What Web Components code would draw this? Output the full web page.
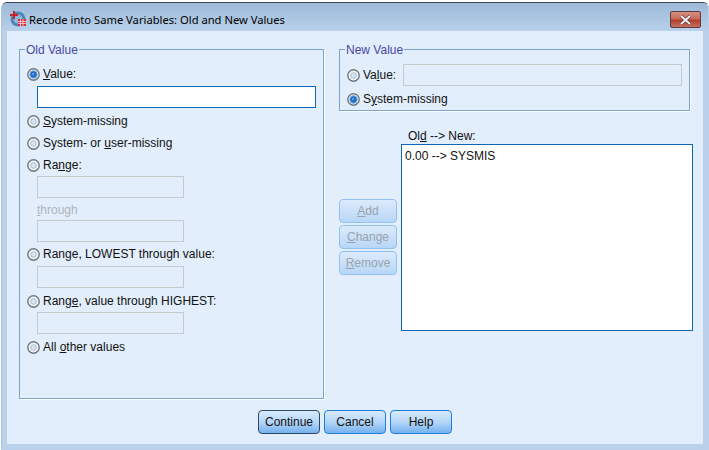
<!DOCTYPE html>
<html>
<head>
<meta charset="utf-8">
<style>
  html, body { margin: 0; padding: 0; background: #fff; }
  body { width: 709px; height: 450px; overflow: hidden; font: 12px "Liberation Sans", Arial, sans-serif; color: #111; }
</style>
</head>
<body>
<spss-dialog caption="Recode into Same Variables: Old and New Values">
  <div style="display:grid;grid-template-columns:305px 366px;column-gap:15px;">
    <group-box label="Old Value" style="height:350px;">
      <div style="display:flex;flex-direction:column;">
        <radio-option checked style="margin-top:17px;"><u>V</u>alue:</radio-option>
        <text-box active style="margin:5px 0 0 10px;width:279px;"></text-box>
        <radio-option style="margin-top:6px;"><u>S</u>ystem-missing</radio-option>
        <radio-option style="margin-top:8px;">System- or <u>u</u>ser-missing</radio-option>
        <radio-option style="margin-top:8px;">Ra<u>n</u>ge:</radio-option>
        <text-box style="margin:4px 0 0 10px;"></text-box>
        <div style="margin:5px 0 0 10px;height:14px;line-height:14px;color:#aeb4ba;"><u>t</u>hrough</div>
        <text-box style="margin:3px 0 0 10px;"></text-box>
        <radio-option style="margin-top:5px;">Ran<u>g</u>e, LOWEST through value:</radio-option>
        <text-box style="margin:5px 0 0 10px;"></text-box>
        <radio-option style="margin-top:6px;">Rang<u>e</u>, value through HIGHEST:</radio-option>
        <text-box style="margin:4px 0 0 10px;"></text-box>
        <radio-option style="margin-top:6px;">All <u>o</u>ther values</radio-option>
      </div>
    </group-box>
    <div style="display:flex;flex-direction:column;">
      <group-box label="New Value" style="height:62px;width:351px;">
        <div style="display:flex;flex-direction:column;">
          <div style="display:flex;align-items:center;margin-top:14px;">
            <radio-option style="width:56px;">Va<u>l</u>ue:</radio-option>
            <text-box style="width:279px;"></text-box>
          </div>
          <radio-option checked style="margin-top:6px;">S<u>y</u>stem-missing</radio-option>
        </div>
      </group-box>
      <div style="display:flex;margin-top:18px;">
        <div style="display:flex;flex-direction:column;gap:2px;margin-top:70px;width:62px;">
          <push-button disabled style="width:58px;"><u>A</u>dd</push-button>
          <push-button disabled style="width:58px;"><u>C</u>hange</push-button>
          <push-button disabled style="width:58px;"><u>R</u>emove</push-button>
        </div>
        <div style="display:flex;flex-direction:column;">
          <div style="height:15px;line-height:14px;padding-left:7px;">Ol<u>d</u> --&gt; New:</div>
          <map-list style="width:292px;height:187px;">0.00 --&gt; SYSMIS</map-list>
        </div>
      </div>
    </div>
  </div>
  <div slot="footer" style="display:flex;gap:4px;margin:11px 0 0 239px;">
    <push-button default>Continue</push-button>
    <push-button>Cancel</push-button>
    <push-button>Help</push-button>
  </div>
</spss-dialog>

<script>
class SpssDialog extends HTMLElement {
  connectedCallback() {
    this.attachShadow({ mode: 'open' });
    this.shadowRoot.innerHTML = `
      <style>
        :host {
          display: block;
          box-sizing: border-box;
          width: 708px;
          height: 448px;
          margin: 2px 0 0 1px;
          background: #b9d1ea;
          border-top: 1px solid #3d4650;
          border-left: 1px solid #a9c4df;
          border-right: 1px solid #b9d1ea;
          border-bottom: 1px solid #b9d1ea;
          border-radius: 6px 6px 0 0;
          overflow: hidden;
        }
        .title {
          box-sizing: border-box;
          height: 28px;
          display: flex;
          align-items: center;
          padding: 4px 20px 0 7px;
          background: linear-gradient(#9cb9d8, #b9d1ea);
        }
        .title svg { flex: none; }
        .title > svg { margin-right: 2px; }
        .caption { font: 11.2px "Noto Sans", "Open Sans", sans-serif; color: #000; flex: 1; white-space: nowrap; padding-top: 1px; }
        .close {
          width: 31px;
          height: 17px;
          align-self: flex-start;
          margin-top: 4px;
          margin-right: -13px;
          box-sizing: border-box;
          display: flex;
          align-items: center;
          justify-content: center;
          border: 1px solid #5f3a3f;
          border-radius: 2px;
          background: linear-gradient(#d58f80 0, #c96c5a 45%, #b33f2c 55%, #c4705f 100%);
        }
        .client {
          margin: 0 5px;
          height: 413px;
          box-sizing: border-box;
          padding: 18px 12px 0 12px;
          background: #e2eefb;
        }
      </style>
      <div class="title">
        <svg width="18" height="18" viewBox="0 0 18 18">
          <circle cx="9" cy="9" r="7.5" fill="#4f86b8"/>
          <circle cx="9" cy="9" r="4.5" fill="#8db7d9"/>
          <path d="M1 4h8v2H1zM4 1h2v8H4z" fill="#c8202f"/>
          <path d="M9 9h8v7H9z" fill="#d92f45"/>
          <path d="M9 11.5h8M9 13.5h8M11.5 9v7M14 9v7" stroke="#f6d5da" stroke-width=".8"/>
        </svg>
        <span class="caption">${this.getAttribute('caption')}</span>
        <span class="close">
          <svg width="13" height="10" viewBox="0 0 13 10"><path d="M2 1l9 8M11 1l-9 8" stroke="#5a3a3d" stroke-width="3.4"/><path d="M2 1l9 8M11 1l-9 8" stroke="#f3eeee" stroke-width="2"/></svg>
        </span>
      </div>
      <div class="client">
        <slot></slot>
        <slot name="footer"></slot>
      </div>`;
  }
}

class GroupBox extends HTMLElement {
  connectedCallback() {
    this.attachShadow({ mode: 'open' });
    this.shadowRoot.innerHTML = `
      <style>
        :host {
          display: block;
          box-sizing: border-box;
          position: relative;
          border: 1px solid #78a6d0;
          box-shadow: 1px 1px 0 #fff;
          padding: 0 7px;
        }
        .legend {
          position: absolute;
          top: -6px;
          left: 5px;
          padding: 0 1px;
          height: 13px;
          line-height: 13px;
          background: #e2eefb;
          color: #4a46a8;
        }
      </style>
      <span class="legend">${this.getAttribute('label')}</span>
      <slot></slot>`;
  }
}

class RadioOption extends HTMLElement {
  connectedCallback() {
    const on = this.hasAttribute('checked');
    this.attachShadow({ mode: 'open' });
    this.shadowRoot.innerHTML = `
      <style>
        :host { display: block; height: 14px; flex: none; }
        .row { display: flex; align-items: center; height: 14px; gap: 3px; white-space: nowrap; line-height: 14px; }
        svg { flex: none; }
      </style>
      <div class="row">
        <svg width="13" height="13" viewBox="0 0 13 13">
          <circle cx="6.5" cy="6.5" r="5.7" fill="#f4f7fa" stroke="#70767c" stroke-width="1.4"/>
          <circle cx="6.5" cy="6.5" r="3.9" fill="${on ? '#1f6fc4' : '#bccbdb'}" stroke="${on ? '#a9c6e6' : '#f4f7fa'}" stroke-width=".9"/>
          ${on ? '<circle cx="6" cy="6" r="1.2" fill="#5b9ee0"/>' : '<circle cx="6.5" cy="6.5" r="2" fill="#d8e4f0"/>'}
        </svg>
        <span><slot></slot></span>
      </div>`;
  }
}

class TextBox extends HTMLElement {
  connectedCallback() {
    const active = this.hasAttribute('active');
    this.attachShadow({ mode: 'open' });
    this.shadowRoot.innerHTML = `
      <style>
        :host {
          display: block;
          box-sizing: border-box;
          flex: none;
          width: 147px;
          height: 22px;
          border: 1px solid ${active ? '#0f66b5' : '#c6cacd'};
          background: ${active ? '#fff' : 'transparent'};
        }
      </style>`;
  }
}

class PushButton extends HTMLElement {
  connectedCallback() {
    const off = this.hasAttribute('disabled');
    const def = this.hasAttribute('default');
    this.attachShadow({ mode: 'open' });
    this.shadowRoot.innerHTML = `
      <style>
        :host {
          display: flex;
          align-items: center;
          justify-content: center;
          box-sizing: border-box;
          width: 62px;
          height: 24px;
          flex: none;
          border-radius: 4px;
          white-space: nowrap;
          border: 1px solid ${off ? '#92c2f1' : def ? '#2f4a66' : '#1f7fd8'};
          background: ${off
            ? 'linear-gradient(#dcebfb, #b7d6f6)'
            : 'linear-gradient(#d8eafc, #b5d6f7 50%, #74b2ef)'};
          color: ${off ? '#98a3ae' : '#111'};
        }
      </style>
      <slot></slot>`;
  }
}

class MapList extends HTMLElement {
  connectedCallback() {
    this.attachShadow({ mode: 'open' });
    this.shadowRoot.innerHTML = `
      <style>
        :host {
          display: block;
          box-sizing: border-box;
          border: 1px solid #0f66b5;
          background: #fff;
          padding: 4px 3px;
          line-height: 14px;
        }
      </style>
      <slot></slot>`;
  }
}

customElements.define('spss-dialog', SpssDialog);
customElements.define('group-box', GroupBox);
customElements.define('radio-option', RadioOption);
customElements.define('text-box', TextBox);
customElements.define('push-button', PushButton);
customElements.define('map-list', MapList);
</script>
</body>
</html>
